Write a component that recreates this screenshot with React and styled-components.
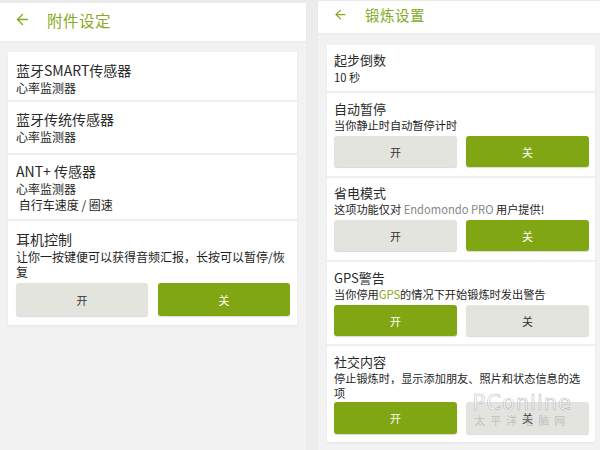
import React from 'react';
import styled, { createGlobalStyle } from 'styled-components';
import { ArrowLeft } from 'lucide-react';

const Global = createGlobalStyle`
  html, body { margin: 0; padding: 0; }
  *, *::before, *::after { box-sizing: border-box; }
  body {
    width: 600px;
    height: 450px;
    overflow: hidden;
    background: #ececec;
    font-family: "Noto Sans CJK SC", "Noto Sans", Roboto, sans-serif;
  }
`;

const Screen = styled.div`
  position: relative;
  display: flex;
  gap: 12px;
  width: 600px;
  height: 450px;
`;

const Panel = styled.div`
  width: ${p => p.$w}px;
  flex-shrink: 0;
  background: #f2f2f2;
  display: flex;
  flex-direction: column;
`;

const Header = styled.div`
  height: ${p => p.$h}px;
  border-top: ${p => p.$top}px solid #eaeaea;
  padding-bottom: ${p => p.$pb}px;
  background: #fff;
  display: flex;
  align-items: center;
  padding-left: ${p => p.$pad}px;
  gap: ${p => p.$gap}px;
  color: #86aa22;
  box-shadow: 0 1px 2px rgba(0,0,0,0.05);
`;

const Title = styled.div`
  font-size: ${p => p.$size}px;
  color: #86aa22;
  letter-spacing: 0.5px;
`;

const Card = styled.div`
  margin: ${p => p.$m};
  background: #fff;
  display: flex;
  flex-direction: column;
  box-shadow: 0 1px 2px rgba(0,0,0,0.06);
`;

const Row = styled.div`
  padding: ${p => p.$pad};
  border-top: ${p => (p.$first ? 'none' : '2px solid #efefef')};
  display: flex;
  flex-direction: column;
`;

const RowTitle = styled.div`
  font-size: ${p => p.$size}px;
  line-height: ${p => p.$lh}px;
  color: #2a2a2a;
`;

const RowSub = styled.div`
  font-size: ${p => p.$size}px;
  line-height: ${p => p.$lh}px;
  color: #1e1e1e;
  white-space: pre-wrap;
`;

const Muted = styled.span`
  color: #888;
`;

const Green = styled.span`
  color: #86aa22;
`;

const Toggle = styled.div`
  display: flex;
  gap: ${p => p.$gap}px;
  margin-top: ${p => p.$mt}px;
`;

const Btn = styled.div`
  flex: 1;
  height: ${p => p.$h}px;
  border-radius: 3px;
  display: flex;
  align-items: center;
  justify-content: center;
  font-size: 11px;
  background: ${p => (p.$on ? '#80a713' : '#e4e4df')};
  color: ${p => (p.$on ? '#fff' : '#333')};
  box-shadow: 0 1px 1px rgba(0,0,0,0.15);
`;

const Watermark = styled.div`
  position: absolute;
  right: 28px;
  bottom: 22px;
  display: flex;
  flex-direction: column;
  align-items: center;
  pointer-events: none;
`;

const WmLogo = styled.div`
  font-family: "DejaVu Sans", sans-serif;
  font-size: 21px;
  letter-spacing: 1px;
  color: rgba(255,255,255,0.7);
  -webkit-text-stroke: 0.6px rgba(140,140,140,0.6);
`;

const WmSub = styled.div`
  font-size: 11px;
  letter-spacing: 5px;
  color: rgba(160,160,160,0.55);
  margin-top: -3px;
`;

function Toggles({ on, h, gap, mt }) {
  return (
    <Toggle $gap={gap} $mt={mt}>
      <Btn $on={on} $h={h}>开</Btn>
      <Btn $on={!on} $h={h}>关</Btn>
    </Toggle>
  );
}

const L = { t: 14, tl: 20, s: 12, sl: 16 };
const R = { t: 13, tl: 19, s: 11.2, sl: 15 };

export default function App() {
  return (
    <Screen>
      <Global />
      <Panel $w={306}>
        <Header $h={41} $top={3} $pb={5} $pad={14} $gap={16}>
          <ArrowLeft size={17} strokeWidth={2} />
          <Title $size={15.5}>附件设定</Title>
        </Header>
        <Card $m="11px 9px 0 8px">
          <Row $first $pad="8px 8px 4px">
            <RowTitle $size={L.t} $lh={L.tl}>蓝牙SMART传感器</RowTitle>
            <RowSub $size={L.s} $lh={L.sl}>心率监测器</RowSub>
          </Row>
          <Row $pad="7px 8px 8px">
            <RowTitle $size={L.t} $lh={L.tl}>蓝牙传统传感器</RowTitle>
            <RowSub $size={L.s} $lh={L.sl}>心率监测器</RowSub>
          </Row>
          <Row $pad="6px 8px 6px">
            <RowTitle $size={L.t} $lh={L.tl}>ANT+ 传感器</RowTitle>
            <RowSub $size={L.s} $lh={L.sl}>心率监测器</RowSub>
            <RowSub $size={L.s} $lh={L.sl}> 自行车速度 / 圈速</RowSub>
          </Row>
          <Row $pad="8px 7px 9px 8px">
            <RowTitle $size={L.t} $lh={L.tl}>耳机控制</RowTitle>
            <RowSub $size={L.s} $lh={15}>让你一按键便可以获得音频汇报，长按可以暂停/恢复</RowSub>
            <Toggles on={false} h={33} gap={10} mt={4} />
          </Row>
        </Card>
      </Panel>

      <Panel $w={282}>
        <Header $h={33} $top={1} $pb={5} $pad={15} $gap={17}>
          <ArrowLeft size={15} strokeWidth={2} />
          <Title $size={14.5}>锻炼设置</Title>
        </Header>
        <Card $m="12px 5px 0 9px">
          <Row $first $pad="5px 6px 6px 7px">
            <RowTitle $size={R.t} $lh={R.tl}>起步倒数</RowTitle>
            <RowSub $size={R.s} $lh={16}>10 秒</RowSub>
          </Row>
          <Row $pad="6px 6px 9px 7px">
            <RowTitle $size={R.t} $lh={R.tl}>自动暂停</RowTitle>
            <RowSub $size={R.s} $lh={R.sl}>当你静止时自动暂停计时</RowSub>
            <Toggles on={false} h={31} gap={9} mt={3} />
          </Row>
          <Row $pad="5px 6px 9px 7px">
            <RowTitle $size={R.t} $lh={R.tl}>省电模式</RowTitle>
            <RowSub $size={R.s} $lh={R.sl}>这项功能仅对 <Muted>Endomondo PRO</Muted> 用户提供!</RowSub>
            <Toggles on={false} h={31} gap={9} mt={3} />
          </Row>
          <Row $pad="6px 6px 8px 7px">
            <RowTitle $size={R.t} $lh={R.tl}>GPS警告</RowTitle>
            <RowSub $size={R.s} $lh={R.sl}>当你停用<Green>GPS</Green>的情况下开始锻炼时发出警告</RowSub>
            <Toggles on h={31} gap={9} mt={3} />
          </Row>
          <Row $pad="6px 6px 8px 7px">
            <RowTitle $size={R.t} $lh={R.tl}>社交内容</RowTitle>
            <RowSub $size={R.s} $lh={R.sl}>停止锻炼时，显示添加朋友、照片和状态信息的选项</RowSub>
            <Toggles on h={32} gap={9} mt={1} />
          </Row>
        </Card>
      </Panel>

      <Watermark>
        <WmLogo>PConline</WmLogo>
        <WmSub>太平洋电脑网</WmSub>
      </Watermark>
    </Screen>
  );
}
